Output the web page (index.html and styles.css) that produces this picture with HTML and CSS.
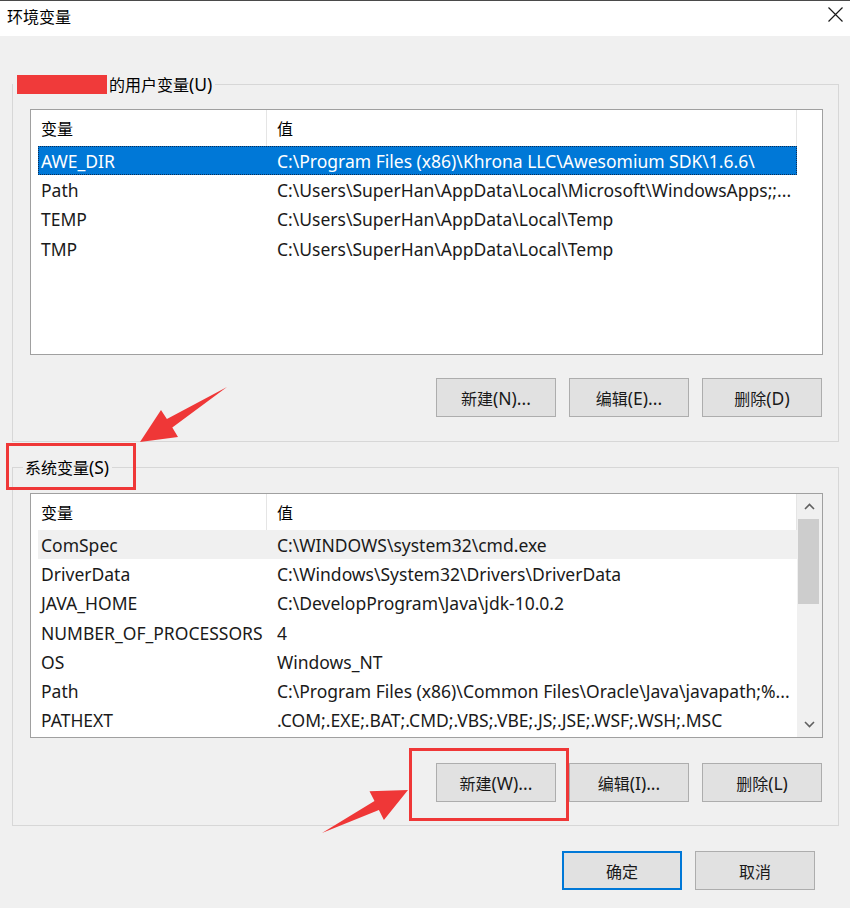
FILE: index.html
```html
<!DOCTYPE html>
<html lang="zh-CN">
<head>
<meta charset="utf-8">
<title>环境变量</title>
<link rel="stylesheet" href="styles.css">
</head>
<body>
<div class="window">
  <div class="titlebar">
    <span class="title cjk">环境变量</span>
    <span class="close"><svg width="15" height="15" viewBox="0 0 15 15"><path d="M0.5 0.5L14.5 14.5M14.5 0.5L0.5 14.5" stroke="#1a1a1a" stroke-width="1.2" fill="none"/></svg></span>
  </div>
  <div class="client">
    <section class="group group-user">
      <div class="group-label"><span class="redact"></span><span class="cjk">的用户变量</span>(U)</div>
      <div class="listview">
        <div class="lv-main">
          <div class="lv-header"><div class="hcell h-name cjk">变量</div><div class="hcell h-value cjk">值</div></div>
          <div class="lv-body">
            <div class="row selected"><span class="c-name">AWE_DIR</span><span class="c-value">C:\Program Files (x86)\Khrona LLC\Awesomium SDK\1.6.6\</span></div>
            <div class="row"><span class="c-name">Path</span><span class="c-value">C:\Users\SuperHan\AppData\Local\Microsoft\WindowsApps;;...</span></div>
            <div class="row"><span class="c-name">TEMP</span><span class="c-value">C:\Users\SuperHan\AppData\Local\Temp</span></div>
            <div class="row"><span class="c-name">TMP</span><span class="c-value">C:\Users\SuperHan\AppData\Local\Temp</span></div>
          </div>
        </div>
        <div class="lv-spacer"></div>
      </div>
      <div class="buttons">
        <button class="btn"><span class="cjk">新建</span>(N)...</button>
        <button class="btn"><span class="cjk">编辑</span>(E)...</button>
        <button class="btn"><span class="cjk">删除</span>(D)</button>
      </div>
    </section>

    <section class="group group-system">
      <div class="group-label"><span class="cjk">系统变量</span>(S)</div>
      <div class="listview">
        <div class="lv-main">
          <div class="lv-header"><div class="hcell h-name cjk">变量</div><div class="hcell h-value cjk">值</div></div>
          <div class="lv-body">
            <div class="row hover"><span class="c-name">ComSpec</span><span class="c-value">C:\WINDOWS\system32\cmd.exe</span></div>
            <div class="row"><span class="c-name">DriverData</span><span class="c-value">C:\Windows\System32\Drivers\DriverData</span></div>
            <div class="row"><span class="c-name">JAVA_HOME</span><span class="c-value">C:\DevelopProgram\Java\jdk-10.0.2</span></div>
            <div class="row"><span class="c-name">NUMBER_OF_PROCESSORS</span><span class="c-value">4</span></div>
            <div class="row"><span class="c-name">OS</span><span class="c-value">Windows_NT</span></div>
            <div class="row"><span class="c-name">Path</span><span class="c-value">C:\Program Files (x86)\Common Files\Oracle\Java\javapath;%...</span></div>
            <div class="row"><span class="c-name">PATHEXT</span><span class="c-value">.COM;.EXE;.BAT;.CMD;.VBS;.VBE;.JS;.JSE;.WSF;.WSH;.MSC</span></div>
          </div>
        </div>
        <div class="scrollbar">
          <div class="sb-arrow"><svg width="11" height="7" viewBox="0 0 11 7"><path d="M1 6L5.5 1.5L10 6" stroke="#606060" stroke-width="1.6" fill="none"/></svg></div>
          <div class="sb-track"><div class="sb-thumb"></div></div>
          <div class="sb-arrow"><svg width="11" height="7" viewBox="0 0 11 7"><path d="M1 1L5.5 5.5L10 1" stroke="#606060" stroke-width="1.6" fill="none"/></svg></div>
        </div>
      </div>
      <div class="buttons">
        <button class="btn"><span class="cjk">新建</span>(W)...</button>
        <button class="btn"><span class="cjk">编辑</span>(I)...</button>
        <button class="btn"><span class="cjk">删除</span>(L)</button>
      </div>
    </section>

    <div class="footer">
      <button class="btn btn-default"><span class="cjk">确定</span></button>
      <button class="btn"><span class="cjk">取消</span></button>
    </div>
  </div>
</div>

<svg class="annotations" width="850" height="908" viewBox="0 0 850 908">
  <rect x="7.5" y="444.5" width="127" height="44" fill="none" stroke="#ef3737" stroke-width="3"/>
  <rect x="410.5" y="749.5" width="157" height="70" fill="none" stroke="#ef3737" stroke-width="3"/>
  <polygon points="140,442 161,410 166.9,419.1 227,387 172.3,427.5 178,437" fill="#ef3737"/>
  <polygon points="408,790 369.5,791.3 374.5,801.1 322,833 378.9,810.1 383.9,819.9" fill="#ef3737"/>
</svg>
</body>
</html>
```

FILE: styles.css
```css
* {
  box-sizing: border-box;
}

html, body {
  margin: 0;
  padding: 0;
}

body {
  width: 850px;
  height: 908px;
  overflow: hidden;
  background: #f0f0f0;
  font-family: "Noto Sans", "Noto Sans CJK SC", sans-serif;
  font-size: 17.5px;
  color: #000;
  position: relative;
}

.cjk {
  font-family: "Noto Sans CJK SC", sans-serif;
  font-size: 16px;
}

.window {
  width: 850px;
  height: 908px;
  display: flex;
  flex-direction: column;
}

.titlebar {
  height: 36px;
  background: #fff;
  border-top: 1px solid #4a4a4a;
  display: flex;
  align-items: center;
  justify-content: space-between;
  padding: 0 7px 0 7px;
}

.title {
  line-height: 20px;
  margin-top: -6px;
}

.close {
  display: flex;
  margin-top: -8px;
}

.client {
  flex: 1;
  display: flex;
  flex-direction: column;
  padding-left: 12px;
}

.group {
  width: 827px;
  border: 1px solid #d7d7d7;
  padding: 0 15px 24px 17px;
}

.group-user {
  margin-top: 48px;
}

.group-system {
  margin-top: 25px;
  padding-bottom: 23px;
}

.group-label {
  width: fit-content;
  margin: -11px 0 0 -7px;
  padding: 0 3px 0 2px;
  line-height: 20px;
  height: 20px;
  background: #f0f0f0;
  white-space: nowrap;
  display: flex;
  align-items: center;
}

.group-user .group-label {
  margin-left: -17px;
  padding-left: 4px;
}

.redact {
  display: inline-block;
  width: 90px;
  height: 19px;
  background: #f03a3a;
  margin-right: 2px;
}

.listview {
  width: 793px;
  height: 246px;
  margin-top: 15px;
  border: 1px solid #a0a0a0;
  background: #fff;
  display: flex;
}

.group-system .listview {
  margin-top: 16px;
  height: 245px;
}

.lv-main {
  width: 766px;
  display: flex;
  flex-direction: column;
}

.lv-spacer {
  width: 25px;
}

.lv-header {
  height: 36px;
  display: flex;
  flex-shrink: 0;
}

.hcell {
  height: 100%;
  display: flex;
  align-items: center;
  padding-left: 10px;
  border-right: 1px solid #e5e5e5;
  padding-bottom: 1px;
}

.h-name {
  width: 236px;
}

.h-value {
  width: 530px;
}

.lv-body {
  display: flex;
  flex-direction: column;
}

.row {
  height: 29.2px;
  margin-left: 7px;
  padding-top: 1px;
  display: grid;
  grid-template-columns: 236px 1fr;
  align-items: center;
  white-space: nowrap;
  color: #1a1a1a;
  line-height: 22px;
}

.row > span {
  padding-left: 3px;
  overflow: hidden;
}

.row.selected {
  background: #0078d7;
  color: #fff;
  outline: 1px dotted #0b2d57;
  outline-offset: -1px;
}

.row.hover {
  background: #f0f0f0;
}

.scrollbar {
  width: 25px;
  background: #f0f0f0;
  display: flex;
  flex-direction: column;
}

.sb-arrow {
  height: 25px;
  display: flex;
  align-items: center;
  justify-content: center;
  padding-right: 1px;
  flex-shrink: 0;
}

.sb-track {
  flex: 1;
  padding: 0 3px 0 1px;
}

.sb-thumb {
  height: 85px;
  background: #cdcdcd;
}

.buttons {
  display: flex;
  justify-content: flex-end;
  gap: 13px;
  margin-top: 23px;
  margin-right: 1px;
}

.group-system .buttons {
  margin-top: 25px;
}

.btn {
  width: 120px;
  height: 39px;
  margin: 0;
  padding: 0;
  background: #e1e1e1;
  border: 1px solid #adadad;
  font-family: "Noto Sans", "Noto Sans CJK SC", sans-serif;
  font-size: 17.5px;
  color: #1a1a1a;
  display: flex;
  align-items: center;
  justify-content: center;
  white-space: nowrap;
}

.btn-default {
  border: 2px solid #0078d7;
}

.footer {
  display: flex;
  justify-content: flex-end;
  gap: 13px;
  margin-top: 25px;
  padding-right: 35px;
}

.annotations {
  position: absolute;
  left: 0;
  top: 0;
  pointer-events: none;
}
```
